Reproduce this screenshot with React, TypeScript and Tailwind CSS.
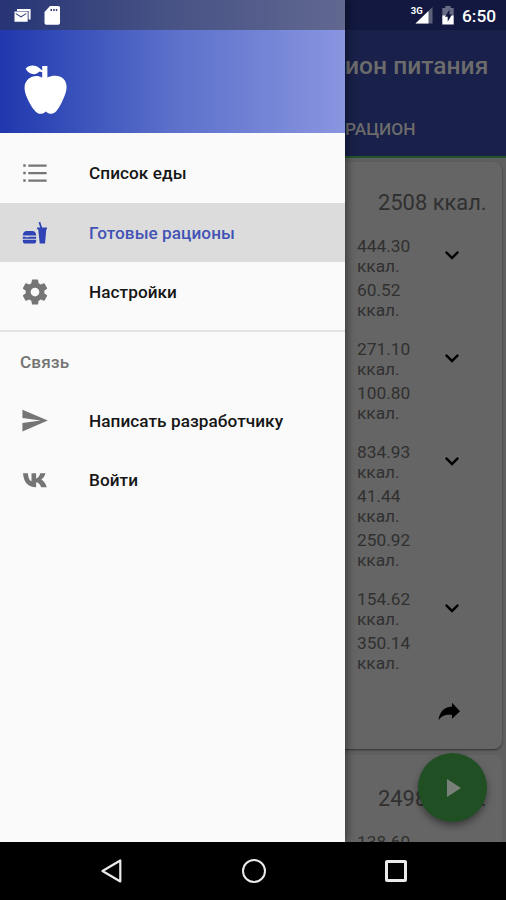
import type { ReactNode } from "react";

type IconProps = { d: string; className: string };

function Icon({ d, className }: IconProps) {
  return (
    <svg viewBox="0 0 24 24" className={className} fill="currentColor">
      <path d={d} />
    </svg>
  );
}

const LIST = "M2.6 4.9h2v2h-2zM6.6 5.1h14.7v1.8H6.6zM2.6 11h2v2h-2zM6.6 11.1h14.7v1.8H6.6zM2.6 17h2v2h-2zM6.6 17.1h14.7v1.8H6.6z";
const GEAR =
  "M19.43 12.98c.04-.32.07-.64.07-.98s-.03-.66-.07-.98l2.11-1.65c.19-.15.24-.42.12-.64l-2-3.46c-.12-.22-.39-.3-.61-.22l-2.49 1c-.52-.4-1.08-.73-1.69-.98l-.38-2.65C14.46 2.18 14.25 2 14 2h-4c-.25 0-.46.18-.49.42l-.38 2.65c-.61.25-1.17.59-1.69.98l-2.49-1c-.23-.09-.49 0-.61.22l-2 3.46c-.13.22-.07.49.12.64l2.11 1.65c-.04.32-.07.65-.07.98s.03.66.07.98l-2.11 1.65c-.19.15-.24.42-.12.64l2 3.46c.12.22.39.3.61.22l2.49-1c.52.4 1.08.73 1.69.98l.38 2.65c.03.24.24.42.49.42h4c.25 0 .46-.18.49-.42l.38-2.65c.61-.25 1.17-.59 1.69-.98l2.49 1c.23.09.49 0 .61-.22l2-3.46c.12-.22.07-.49-.12-.64l-2.11-1.65zM12 15.5c-1.93 0-3.5-1.57-3.5-3.5s1.57-3.5 3.5-3.5 3.5 1.57 3.5 3.5-1.57 3.5-3.5 3.5z";
const SEND = "M2.01 21L23 12 2.01 3 2 10l15 2-15 2z";
const VK =
  "M12.7 17.7C6.2 17.7 2.9 13.4 2.4 6.5h3.9c.3 4.1 1.7 6 2.9 6.5V6.5h3.7v4.2c1.3-.2 2.8-2 3.3-4.2h4.2c-.5 2.5-2.3 4.3-3.5 5.1 1.2.6 3.3 2.3 4.5 6.1h-4.4c-.7-2.1-2-3.7-4.1-4v4z";
const CHEVRON = "M7.41 8.59L12 13.17l4.59-4.58L18 10l-6 6-6-6z";

function FoodIcon() {
  return (
    <svg viewBox="0 0 30 30" className="size-[30px]" fill="currentColor">
      <path d="M2.8 17.6c0-3 1.5-4.7 4-4.7h5.4c2.6 0 4 1.7 4 4.7z" />
      <path d="M2.8 18.7h2.7l1.5.9 1.8-.9h7.4v2H2.8zM2.8 21.8h13.4v.9c0 1.9-1 2.9-2.6 2.9H5.5c-1.6 0-2.7-1-2.7-2.9z" />
      <path d="M17 9.4h3.2l-1.6-5 1.6-.6 1.9 5.6H27v1.8h-.7L25 25.6h-5.3l-1.5-14.4H17z" />
    </svg>
  );
}

function MenuItem({ icon, label, active }: { icon: ReactNode; label: string; active?: boolean }) {
  return (
    <div className={active ? "flex h-[59px] items-center bg-[#dcdcdc] pl-5 text-[#2f43b5]" : "flex h-[59px] items-center pl-5 text-[#757575]"}>
      <span className="flex w-[69px] shrink-0">{icon}</span>
      <span className={active ? "pt-[2px] text-[17.2px] font-medium tracking-[0.05px] text-[#4353b5]" : "pt-[2px] text-[17.2px] font-medium tracking-[0.05px] text-[#161616]"}>{label}</span>
    </div>
  );
}

function Drawer() {
  return (
    <aside className="z-10 flex w-[345px] shrink-0 flex-col bg-[#fafafa] shadow-[2px_0_8px_rgba(0,0,0,0.45)]">
      <header className="flex h-[133px] flex-col bg-linear-to-r from-[#2037ad] via-[#5c70cb] to-[#8995df]">
        <div className="flex h-[30px] shrink-0 items-start bg-[#303030]/45 pl-3.5 text-white">
          <svg viewBox="0 0 48 30" className="h-[30px] w-12" fill="currentColor">
            <path d="M3 9h13.6v10.5h-2V11H3z" />
            <path fillRule="evenodd" d="M.5 11.4h13.2v10.3H.5zM1.7 14 7 17.5l5.3-3.5v-1L7 16.3 1.7 13z" />
            <path fillRule="evenodd" d="M36 6h8c1.3 0 2 .7 2 1.8v15c0 1.2-.7 1.9-1.9 1.9H32.4c-1.2 0-1.9-.7-1.9-1.9V12zm.5 3v2H38V9zm2.7 0v2h1.5V9zm2.6 0v2h1.4V9z" />
          </svg>
        </div>
        <svg viewBox="0 0 46 52" className="mt-[34px] ml-[21px] h-[52px] w-[46px] text-white" fill="currentColor">
          <path d="M4.5 4.6C8 .8 14 .5 18 3.8l3.2 2.6V2h5.2v11.5c5-2.5 12.4-2.6 16.2 1.4 4.7 5.2 3 12.4.4 18.3-2.6 6.1-5.9 13.2-10 15.9-3 1.6-6 .3-8.1-1.6-2.4 2.1-5.5 3.2-8.5 1.4-4.3-2.8-8.2-10-10.8-16.2-2.5-6-3.5-12.9 1.7-17.6 3.7-3.3 9.8-4.1 13.9-1.4V8.2l-2.6-.6C14.6 11.8 7.8 10.9 4.5 4.6z" />
        </svg>
      </header>
      <nav className="pt-[10px]">
        <MenuItem icon={<Icon d={LIST} className="size-[30px]" />} label="Список еды" />
        <div className="h-px" />
        <MenuItem icon={<FoodIcon />} label="Готовые рационы" active />
        <MenuItem icon={<Icon d={GEAR} className="size-[30px]" />} label="Настройки" />
        <div className="mt-[9px] h-[2px] bg-[#e3e3e3]" />
        <div className="flex h-[59px] items-center pt-[2px] pl-5 text-[17.2px] font-medium tracking-[0.1px] text-[#747474]">Связь</div>
        <MenuItem icon={<Icon d={SEND} className="size-[29px]" />} label="Написать разработчику" />
        <MenuItem icon={<Icon d={VK} className="size-[30px]" />} label="Войти" />
      </nav>
    </aside>
  );
}

const MEALS = [
  ["444.30", "60.52"],
  ["271.10", "100.80"],
  ["834.93", "41.44", "250.92"],
  ["154.62", "350.14"],
];

function Calories({ value }: { value: string }) {
  return (
    <div className="h-11 w-[70px] text-[17.3px] leading-5">
      {value}
      <br />
      ккал.
    </div>
  );
}

function Content() {
  return (
    <main className="relative flex w-[161px] flex-col overflow-hidden bg-[#5f5f5f] text-[#303030]">
      <div className="flex h-[30px] shrink-0 items-start bg-[#12183f] pl-[65px] text-white">
        <svg viewBox="0 0 45 30" className="h-[30px] w-[45px]">
          <path d="M22.5 7v16.5H5.5z" fill="#5c6079" />
          <path d="M18.5 11v12.5H5.5z" fill="#fff" />
          <text x="0.8" y="13.6" fill="#fff" stroke="#12183f" strokeWidth="1.5" paintOrder="stroke" fontSize="9.5" fontWeight="700" fontFamily="Roboto">3G</text>
          <path d="M32.3 8h3V6h5.4v2h3v8H32.3z" fill="#676b85" />
          <path d="M32.3 15.5h11.4v9H32.3z" fill="#fff" />
          <path d="M39.5 9.5 35 16.8h2.7v5l4.2-7.4h-2.4z" fill="#12183f" />
        </svg>
        <span className="ml-[7px] pt-[5px] text-[17.3px] leading-[22px] font-medium">6:50</span>
      </div>
      <div className="flex h-[126px] shrink-0 flex-col bg-[#192049] text-[#6c6c6c]">
        <h1 className="mt-[20px] text-[24.6px] leading-[32px] font-medium whitespace-nowrap">ион питания</h1>
        <div className="mt-[36px] text-[17.3px] leading-[22px] font-medium text-[#6c6c6c]">РАЦИОН</div>
      </div>
      <div className="h-[2px] shrink-0 bg-[#235428]" />
      <section className="mt-1 mr-1 flex h-[587px] shrink-0 flex-col rounded-r-lg bg-[#656565] pl-3 shadow-[0_1px_2px_rgba(0,0,0,0.5)]">
        <h2 className="mt-[26px] pl-[21px] text-[21.9px] leading-[30px] whitespace-nowrap">2508 ккал.</h2>
        <div className="mt-[18px] flex flex-col gap-[15px]">
          {MEALS.map((meal) => (
            <div key={meal[0]} className="flex items-start">
              <div>
                {meal.map((value) => (
                  <Calories key={value} value={value} />
                ))}
              </div>
              <Icon d={CHEVRON} className="mt-[5px] ml-[11px] size-7 text-black" />
            </div>
          ))}
        </div>
        <svg viewBox="0 0 24 20" className="mt-[25px] ml-[81px] h-5 w-6" fill="#000">
          <path d="M14 .7 22 9.2l-8 7.6v-4C7.7 12.2 3.6 13.5.6 18.2 1.1 10.5 5.6 5.2 14 4.5z" />
        </svg>
      </section>
      <section className="mt-1.5 mr-1 flex-1 overflow-hidden rounded-tr-lg bg-[#656565] pl-3">
        <h2 className="pt-[29px] pl-[21px] text-[21.9px] leading-[30px] whitespace-nowrap">2498 ккал.</h2>
        <div className="mt-[18px] text-[17.3px] leading-5">138.60</div>
      </section>
      <button className="absolute top-[753px] left-[73px] flex size-[69px] items-center justify-center rounded-full bg-[#1f4f22] shadow-[0_4px_7px_rgba(0,0,0,0.4)]">
        <svg viewBox="0 0 14 18" className="ml-[2px] h-[18px] w-3.5" fill="#797f79">
          <path d="M0 0 14 9 0 18z" />
        </svg>
      </button>
    </main>
  );
}

export default function App() {
  return (
    <div className="flex h-[900px] w-[506px] flex-col overflow-hidden bg-black font-['Roboto',sans-serif]">
      <div className="flex h-[842px] overflow-hidden">
        <Drawer />
        <Content />
      </div>
      <footer className="flex h-[58px] items-center pl-[101px] text-[#eaeaea]">
        <svg viewBox="0 0 22 26" className="h-[26px] w-[22px]" fill="none" stroke="currentColor" strokeWidth="2.2" strokeLinejoin="round">
          <path d="M19.3 2.5v21L1.5 13z" />
        </svg>
        <div className="ml-[119px] size-6 rounded-full border-[2.5px] border-current" />
        <div className="ml-[119px] size-[22px] rounded-[2px] border-[3px] border-current" />
      </footer>
    </div>
  );
}
